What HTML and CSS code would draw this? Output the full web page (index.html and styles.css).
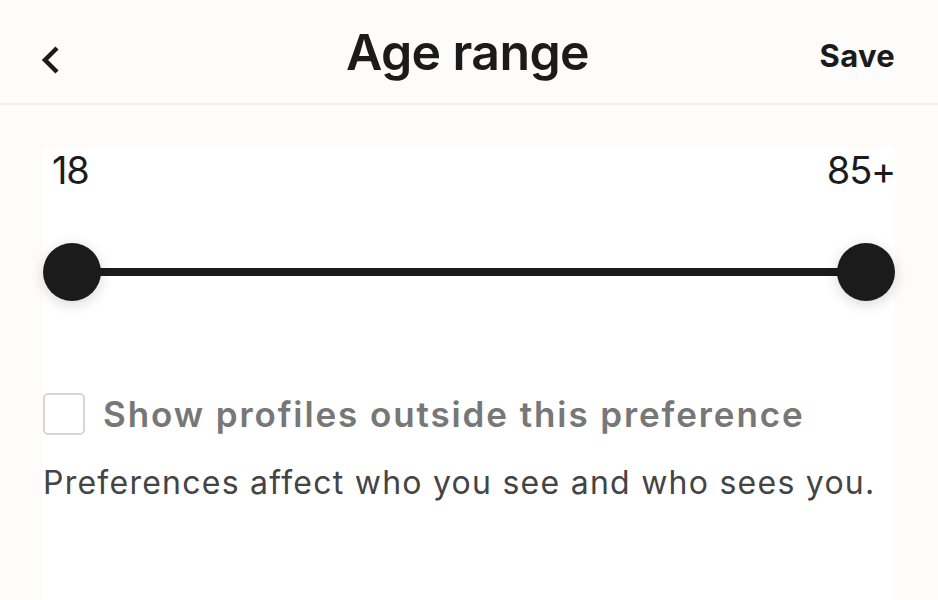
FILE: index.html
```html
<!DOCTYPE html>
<html>
<head>
    <title>Age range</title>
    <link rel="stylesheet" href="styles.css">
</head>
<body>
    <header class="topbar">
        <button class="back" aria-label="Back">
            <svg width="22" height="30" viewBox="0 0 22 30">
                <path d="M17 3 L5 15 L17 27" fill="none" stroke="#1b1b1b" stroke-width="4.5" stroke-linejoin="miter"/>
            </svg>
        </button>
        <h1 class="title">Age range</h1>
        <button class="save">Save</button>
    </header>

    <main class="content">
        <div class="range-labels">
            <span class="min">18</span>
            <span class="max">85+</span>
        </div>

        <div class="slider">
            <div class="track"></div>
            <div class="knob"></div>
            <div class="knob"></div>
        </div>

        <label class="option">
            <span class="checkbox"></span>
            <span class="option-text">Show profiles outside this preference</span>
        </label>

        <p class="note">Preferences affect who you see and who sees you.</p>
    </main>
</body>
</html>
```

FILE: styles.css
```css
body {
    margin: 0;
    background-color: #fdfcfb;
    font-family: "Inter", "Liberation Sans", sans-serif;
    color: #1b1b1b;
}

.topbar {
    display: grid;
    grid-template-columns: 1fr auto 1fr;
    align-items: center;
    height: 103px;
    padding: 0 43px 0 40px;
    border-bottom: 2px solid #efedf0;
}

.back {
    justify-self: start;
    background: none;
    border: none;
    padding: 0;
    margin-top: 20px;
    cursor: pointer;
}

.title {
    margin: 0;
    font-size: 50px;
    font-weight: 600;
    letter-spacing: -0.6px;
}

.save {
    justify-self: end;
    background: none;
    border: none;
    padding: 0;
    margin-top: 8px;
    font-family: inherit;
    font-size: 31px;
    font-weight: 700;
    letter-spacing: 0.3px;
    color: #1b1b1b;
    cursor: pointer;
}

.content {
    margin: 42px 43px 0;
    background-color: #fff;
    min-height: 460px;
}

.range-labels {
    display: flex;
    justify-content: space-between;
    padding: 0 0 0 9px;
    font-size: 38px;
    line-height: 46px;
    letter-spacing: -1.2px;
}

.slider {
    display: flex;
    align-items: center;
    height: 58px;
    margin-top: 50px;
    position: relative;
}

.track {
    position: absolute;
    left: 29px;
    right: 29px;
    top: 25px;
    height: 8px;
    background-color: #1b1b1b;
}

.knob {
    width: 58px;
    height: 58px;
    border-radius: 50%;
    background-color: #1b1b1b;
    box-shadow: 0 3px 14px rgba(0, 0, 0, 0.16);
    position: relative;
}

.knob:last-child {
    margin-left: auto;
}

.option {
    display: flex;
    align-items: center;
    gap: 18px;
    margin-top: 92px;
}

.checkbox {
    width: 38px;
    height: 38px;
    border: 2px solid #d6d6d6;
    border-radius: 5px;
    flex-shrink: 0;
}

.option-text {
    font-size: 35px;
    font-weight: 600;
    color: #777;
    letter-spacing: 1.9px;
}

.note {
    margin: 28px 0 0;
    font-size: 32px;
    color: #444;
    letter-spacing: 1.25px;
}
```
